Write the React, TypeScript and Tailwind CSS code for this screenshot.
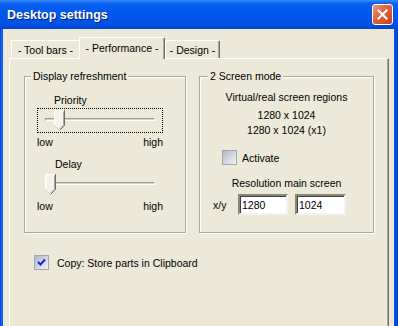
import React from "react";

const font = { fontFamily: '"Liberation Sans", Arial, sans-serif' };

function Thumb() {
  return (
    <svg width="11" height="21" viewBox="0 0 11 21" className="block">
      <path d="M0.5 0.5 H10.5 V15.5 L5.5 20.5 L0.5 15.5 Z" fill="#f3f2ec" />
      <path d="M0.5 15.5 V0.5 H10" stroke="#ffffff" strokeWidth="1" fill="none" />
      <path d="M1.5 15.5 V1.5 H9" stroke="#f7f6f1" strokeWidth="1" fill="none" />
      <path d="M10.5 0 V15.5 L5.5 20.5" stroke="#716f64" strokeWidth="1" fill="none" />
      <path d="M9.5 1.5 V15 L5.5 19" stroke="#aca899" strokeWidth="1" fill="none" />
      <path d="M0.5 15.5 L5 20" stroke="#d6d3c6" strokeWidth="1" fill="none" />
    </svg>
  );
}

function Slider({ focused, pos }: { focused: boolean; pos: "a" | "b" }) {
  return (
    <div
      className={
        "relative w-[126px] h-[25px] border border-dotted pt-[9px] px-[7px] " +
        (focused ? "border-black" : "border-transparent")
      }
    >
      <div className="h-[3px] border-t border-l border-[#9d9a8c] border-b border-b-white border-r border-r-white bg-[#d4d0c4]" />
      <div className={"absolute top-[1px] " + (pos === "a" ? "left-[16px]" : "left-[7px]")}>
        <Thumb />
      </div>
    </div>
  );
}

function SliderBlock({ label, focused, pos, labelPad }: { label: string; focused: boolean; pos: "a" | "b"; labelPad: string }) {
  return (
    <div className="flex flex-col w-[126px]">
      <div className={"leading-[14px] h-[14px] " + labelPad}>{label}</div>
      <div className="mt-[1px]">
        <Slider focused={focused} pos={pos} />
      </div>
      <div className="mt-[2px] flex justify-between leading-[14px] h-[14px]">
        <span>low</span>
        <span>high</span>
      </div>
    </div>
  );
}

function Checkbox({ checked }: { checked: boolean }) {
  return (
    <div className="w-[15px] h-[15px] border border-[#a4a4b4] bg-[linear-gradient(135deg,#b4b4c6_0%,#d4d4de_50%,#f2f2f6_100%)] flex items-center justify-center shrink-0">
      {checked && (
        <svg width="9" height="9" viewBox="0 0 9 9">
          <path d="M1 4 L3.5 6.5 L8 1.5" stroke="#2121d8" strokeWidth="2" fill="none" />
        </svg>
      )}
    </div>
  );
}

function Input({ value, w }: { value: string; w: string }) {
  return (
    <div
      className={
        "h-[21px] " +
        w +
        " bg-white border-t-2 border-l-2 border-t-[#8a877a] border-l-[#8a877a] border-b-2 border-r-2 border-b-[#f4f3ee] border-r-[#f4f3ee] shadow-[inset_1px_1px_0_#404040] flex items-center pl-[2px] leading-[14px]"
      }
    >
      {value}
    </div>
  );
}

export default function App() {
  return (
    <div className="w-[398px] h-[326px] overflow-hidden flex flex-col bg-[#0054e3] text-black text-[10.5px]" style={font}>
      {/* Title bar */}
      <div className="h-[29px] shrink-0 flex items-center justify-between pl-[7px] pr-[5px] bg-[linear-gradient(180deg,#3b8cf7_0%,#0a62f2_12%,#0058ee_40%,#0055e8_75%,#0046d4_100%)]">
        <span className="text-white font-bold text-[12.5px] pt-[2px] [text-shadow:1px_1px_#0a1d7a]">Desktop settings</span>
        <div className="w-[21px] h-[21px] rounded-[3px] border border-white bg-[linear-gradient(135deg,#f09a7c_0%,#e2603a_45%,#c9401a_100%)] flex items-center justify-center">
          <svg width="11" height="11" viewBox="0 0 11 11">
            <path d="M1.5 1.5 L9.5 9.5 M9.5 1.5 L1.5 9.5" stroke="#ffffff" strokeWidth="2.2" strokeLinecap="square" />
          </svg>
        </div>
      </div>

      {/* Body */}
      <div className="flex-1 flex flex-row">
        <div className="w-[3px] bg-[linear-gradient(90deg,#0831d9_0%,#166aee_50%,#0054e3_100%)]" />
        <div className="flex-1 bg-[#ece9d8] flex flex-col">
          {/* Tabs */}
          <div className="mt-[7px] pl-[8px] h-[22px] flex items-end shrink-0">
            <div className="w-[68px] h-[18px] border-l border-t border-white rounded-tl-[2px] flex items-center justify-center leading-[14px]">
              - Tool bars -
            </div>
            <div className="relative z-10 -mb-px w-[86px] h-[22px] border-l border-t border-white border-r border-r-[#716f64] shadow-[inset_-1px_0_0_#aca899] rounded-t-[2px] bg-[#ece9d8] flex items-start justify-center pt-[3px] leading-[14px]">
              - Performance -
            </div>
            <div className="w-[55px] h-[18px] border-l border-t border-white border-r border-r-[#716f64] shadow-[inset_-1px_0_0_#aca899] rounded-t-[2px] flex items-center justify-center leading-[14px]">
              - Design -
            </div>
          </div>

          {/* Panel */}
          <div className="ml-[6px] mr-[5px] flex-1 border-l border-t border-white border-r border-r-[#716f64] shadow-[inset_-1px_0_0_#aca899] pt-[11px] pl-[14px] flex flex-col">
            <div className="flex gap-[13px]">
              {/* Group 1 */}
              <fieldset className="m-0 p-0 min-w-0 w-[162px] h-[163px] border border-[#aca899] shadow-[inset_1px_1px_0_#fff,1px_1px_0_#fff]">
                <legend className="ml-[6px] px-[2px] leading-[13px] bg-[#ece9d8]">Display refreshment</legend>
                <div className="pl-[12px] pt-[10px] flex flex-col gap-[8px]">
                  <SliderBlock label="Priority" focused pos="a" labelPad="pl-[17px]" />
                  <SliderBlock label="Delay" focused={false} pos="b" labelPad="pl-[18px]" />
                </div>
              </fieldset>

              {/* Group 2 */}
              <fieldset className="m-0 p-0 min-w-0 w-[175px] h-[163px] border border-[#aca899] shadow-[inset_1px_1px_0_#fff,1px_1px_0_#fff]">
                <legend className="ml-[8px] px-[2px] leading-[13px] bg-[#ece9d8]">2 Screen mode</legend>
                <div className="flex flex-col">
                  <div className="pt-[7px] text-center leading-[14px]">Virtual/real screen regions</div>
                  <div className="mt-[4px] text-center leading-[15px]">
                    <div>1280 x 1024</div>
                    <div>1280 x 1024 (x1)</div>
                  </div>
                  <div className="mt-[12px] pl-[22px] h-[15px] flex items-center gap-[5px]">
                    <Checkbox checked={false} />
                    <span className="leading-[14px]">Activate</span>
                  </div>
                  <div className="mt-[11px] text-center leading-[14px]">Resolution main screen</div>
                  <div className="mt-[4px] pl-[13px] flex items-center">
                    <span className="w-[25px] leading-[14px]">x/y</span>
                    <Input value="1280" w="w-[50px]" />
                    <div className="w-[7px]" />
                    <Input value="1024" w="w-[51px]" />
                  </div>
                </div>
              </fieldset>
            </div>

            <div className="mt-[22px] ml-[10px] flex items-center gap-[8px] h-[15px]">
              <Checkbox checked />
              <span className="leading-[14px]">Copy: Store parts in Clipboard</span>
            </div>
          </div>
        </div>
        <div className="w-[4px] bg-[linear-gradient(90deg,#0054e3_0%,#0a4bd6_60%,#0831d9_100%)]" />
      </div>
    </div>
  );
}
